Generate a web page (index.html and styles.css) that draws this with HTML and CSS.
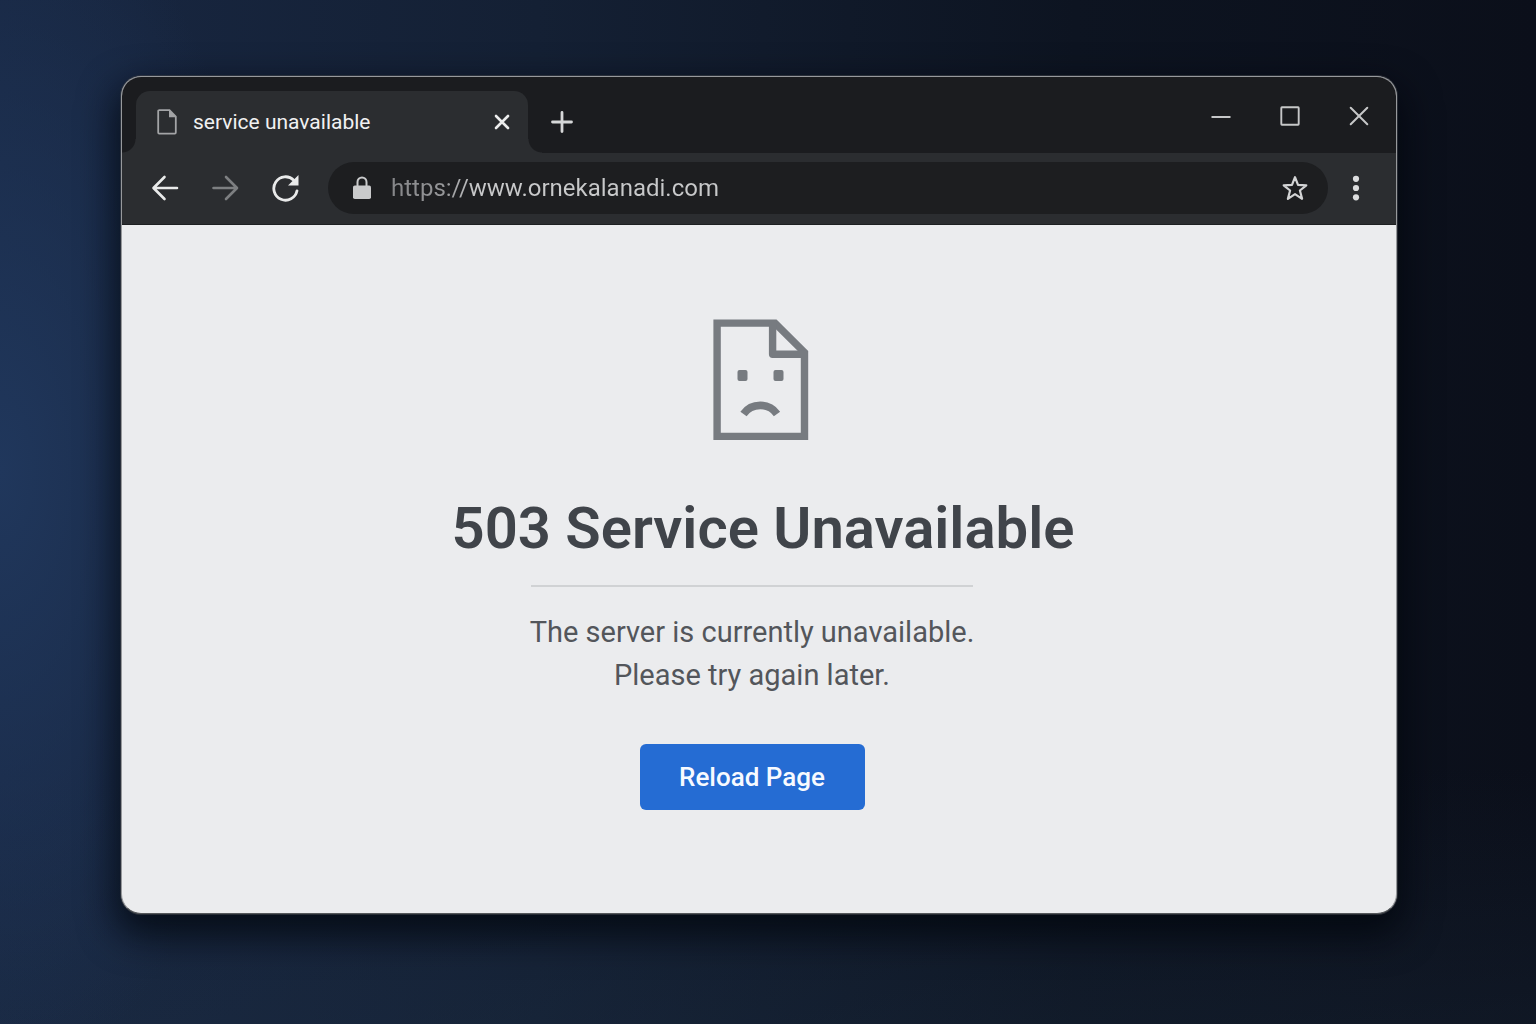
FILE: index.html
```html
<!DOCTYPE html>
<html lang="en">
<head>
<meta charset="utf-8">
<meta name="viewport" content="width=device-width, initial-scale=1">
<title>service unavailable</title>
<link rel="stylesheet" href="styles.css">
</head>
<body>
<div class="window">
  <header class="titlebar">
    <div class="tab">
      <svg class="tab-icon" width="20" height="26" viewBox="0 0 20 26" aria-hidden="true"><path d="M2 1.2h10.5L18.8 7.5V23.6a1 1 0 0 1-1 1H2.2a1 1 0 0 1-1-1V2.2a1 1 0 0 1 1-1z" fill="none" stroke="#a3a4a6" stroke-width="1.8"/><path d="M12 1v7.2h7z" fill="#a3a4a6"/></svg>
      <span class="tab-title">service unavailable</span>
      <button class="icon-button tab-close" type="button" aria-label="Close tab">
        <svg width="16" height="16" viewBox="0 0 16 16"><path d="M2 2l12 12M14 2L2 14" stroke="#eceded" stroke-width="2.6" stroke-linecap="round"/></svg>
      </button>
    </div>
    <button class="icon-button new-tab" type="button" aria-label="New tab">
      <svg width="22" height="22" viewBox="0 0 22 22"><path d="M11 1.500v19M1.500 11h19" stroke="#d6d7d8" stroke-width="2.800" stroke-linecap="round"/></svg>
    </button>
    <div class="window-controls">
      <button class="icon-button" type="button" aria-label="Minimize">
        <svg width="20" height="20" viewBox="0 0 20 20"><path d="M.5 11h19" stroke="#c6c7c8" stroke-width="2"/></svg>
      </button>
      <button class="icon-button" type="button" aria-label="Maximize">
        <svg width="20" height="20" viewBox="0 0 20 20"><rect x="1.300" y="1.300" width="17.400" height="17.400" rx=".6" fill="none" stroke="#c6c7c8" stroke-width="1.900"/></svg>
      </button>
      <button class="icon-button" type="button" aria-label="Close">
        <svg width="20" height="20" viewBox="0 0 20 20"><path d="M1.700 1.700l16.600 16.600M18.300 1.700L1.700 18.300" stroke="#c6c7c8" stroke-width="2" stroke-linecap="round"/></svg>
      </button>
    </div>
  </header>

  <nav class="toolbar" aria-label="Navigation">
    <div class="nav-buttons">
      <button class="icon-button" type="button" aria-label="Back">
        <svg width="28" height="28" viewBox="0 0 28 28"><path d="M26 14H3M13.500 3L2.500 14l11 11" fill="none" stroke="#e9eaea" stroke-width="2.600" stroke-linecap="round" stroke-linejoin="round"/></svg>
      </button>
      <button class="icon-button" type="button" aria-label="Forward">
        <svg width="28" height="28" viewBox="0 0 28 28"><path d="M2.500 14H25.500M15 3l11 11-11 11" fill="none" stroke="#7d7f81" stroke-width="2.600" stroke-linecap="round" stroke-linejoin="round"/></svg>
      </button>
      <button class="icon-button" type="button" aria-label="Reload">
        <svg width="28" height="28" viewBox="0 0 28 28"><path d="M22.800 6.200A11.700 11.700 0 1 0 26 16.800" fill="none" stroke="#e9eaea" stroke-width="2.800" stroke-linecap="round"/><path d="M27.500 1v10.500H17z" fill="#e9eaea"/></svg>
      </button>
    </div>
    <div class="address-bar">
      <svg width="18" height="24" viewBox="0 0 18 24" aria-hidden="true"><path d="M4.500 11V6a4.500 4.500 0 0 1 9 0v5" fill="none" stroke="#c9cacb" stroke-width="2"/><rect y="9.500" width="18" height="13.500" rx="1.800" fill="#c9cacb"/></svg>
      <input class="address" type="text" aria-label="Address" value="https://www.ornekalanadi.com" spellcheck="false">
      <button class="icon-button" type="button" aria-label="Bookmark this page">
        <svg width="28" height="28" viewBox="0 0 28 28"><path d="M14 3.200l3 7.600 8.300.5-6.400 5.200 2.200 8.300L14 20.200l-7.100 4.600 2.200-8.300-6.400-5.200 8.300-.5z" fill="none" stroke="#d3d4d5" stroke-width="2.200" stroke-linejoin="round"/></svg>
      </button>
    </div>
    <button class="icon-button menu-button" type="button" aria-label="Menu">
      <svg width="8" height="26" viewBox="0 0 8 26"><g fill="#dcddde"><circle cx="4" cy="3.800" r="3.100"/><circle cx="4" cy="13" r="3.100"/><circle cx="4" cy="22.300" r="3.100"/></g></svg>
    </button>
  </nav>

  <main class="page">
    <svg class="sad-page" width="96" height="122" viewBox="0 0 96 122" aria-hidden="true">
      <g fill="none" stroke="#777b80" stroke-width="7.400" stroke-linejoin="round">
        <path d="M4.100 4.100H62L91.500 33.500V117.400H4.100z" stroke-linejoin="miter"/>
        <path d="M59.600 4V35.300H92"/>
        <path d="M30.500 95C38.500 83.500 56 83.500 64 95" stroke-width="7.600"/>
      </g>
      <g fill="#777b80"><rect x="24.500" y="51" width="10" height="11" rx="2"/><rect x="60.500" y="51" width="10" height="11" rx="2"/></g>
    </svg>
    <h1 class="heading">503 Service Unavailable</h1>
    <div class="details">
      <hr class="rule">
      <p class="message">The server is currently unavailable.<br>Please try again later.</p>
      <button class="reload" type="button">Reload Page</button>
    </div>
  </main>
</div>
</body>
</html>
```
FILE: styles.css
```css
* {
  box-sizing: border-box;
}

body {
  display: flex;
  min-height: 100vh;
  margin: 0;
  padding: 76px 139px 110px 121px;
  font-family: Roboto, "Liberation Sans", sans-serif;
  background:
    radial-gradient(ellipse 18% 60% at 0% 46%, #20375c 0%, transparent 100%),
    linear-gradient(to bottom, transparent 75%, rgba(30, 48, 68, 0.25) 100%),
    linear-gradient(to right, #182742 0%, #142034 35%, #0d1421 70%, #0b0f1a 100%);
}

button {
  font: inherit;
  cursor: pointer;
}

.window {
  display: flex;
  flex: 1;
  flex-direction: column;
  overflow: hidden;
  border: 1px solid #97999c;
  border-bottom-color: #55585b;
  border-radius: 20px;
  background: #ebecee;
  box-shadow:
    0 0 0 1px rgba(60, 64, 70, 0.6),
    0 16px 36px 6px rgba(2, 6, 12, 0.75);
}

.icon-button {
  display: flex;
  align-items: center;
  justify-content: center;
  padding: 0;
  border: 0;
  background: none;
}

.titlebar {
  display: flex;
  align-items: flex-start;
  height: 76px;
  padding: 14px 27px 0 14px;
  background: #1b1c1f;
}

.tab {
  position: relative;
  display: flex;
  align-items: center;
  gap: 16px;
  width: 392px;
  height: 62px;
  padding: 0 18px 0 21px;
  border-radius: 14px 14px 0 0;
  background: #2b2d30;
}

/* Flared feet joining the tab to the toolbar */
.tab::before,
.tab::after {
  content: "";
  position: absolute;
  bottom: 0;
  width: 14px;
  height: 14px;
}

.tab::before {
  right: 100%;
  background: radial-gradient(circle at 0 0, transparent 13px, #2b2d30 14px);
}

.tab::after {
  left: 100%;
  background: radial-gradient(circle at 100% 0, transparent 13px, #2b2d30 14px);
}

.tab-title {
  flex: 1;
  font-size: 21px;
  color: #f1f1f2;
}

.new-tab {
  margin: 20px 0 0 23px;
}

.window-controls {
  display: flex;
  gap: 49px;
  margin: 15px 0 0 auto;
}

.toolbar {
  display: flex;
  align-items: center;
  gap: 24px;
  height: 72px;
  padding: 0 36px 2px 29px;
  border-bottom: 1px solid #1d1f21;
  background: #2b2d30;
}

.nav-buttons {
  display: flex;
  gap: 32px;
  margin-right: 5px;
}

.address-bar {
  display: flex;
  flex: 1;
  align-items: center;
  gap: 20px;
  height: 52px;
  padding: 0 19px 0 25px;
  border-radius: 26px;
  background: #1d1e20;
}

.address {
  flex: 1;
  min-width: 0;
  padding: 0;
  border: 0;
  outline: 0;
  font-family: inherit;
  font-size: 24px;
  line-height: 32px;
  color: transparent;
  background: linear-gradient(to right, #858688 0, #97989a 56px, #c8c9ca 84px);
  -webkit-background-clip: text;
  background-clip: text;
}

.page {
  display: flex;
  flex: 1;
  flex-direction: column;
  align-items: center;
  padding: 94px 24px 60px;
}

.sad-page {
  margin-left: 3px;
}

.heading {
  margin: 51px 0 0;
  padding-left: 8px;
  font-size: 58px;
  font-weight: 600;
  line-height: 72px;
  color: #40444a;
}

.details {
  display: flex;
  flex-direction: column;
  align-items: center;
  width: 442px;
  margin: 21px 14px 0 0;
}

.rule {
  width: 100%;
  margin: 0;
  border: 0;
  border-top: 2px solid #d0d2d4;
}

.message {
  margin: 24px 0 0;
  font-size: 29px;
  line-height: 43px;
  text-align: center;
  white-space: nowrap;
  color: #53565b;
}

.reload {
  width: 225px;
  height: 66px;
  margin-top: 47px;
  padding: 0;
  border: 0;
  border-radius: 6px;
  font-size: 26px;
  font-weight: 500;
  color: #f7faff;
  background: #256cd3;
}
```
